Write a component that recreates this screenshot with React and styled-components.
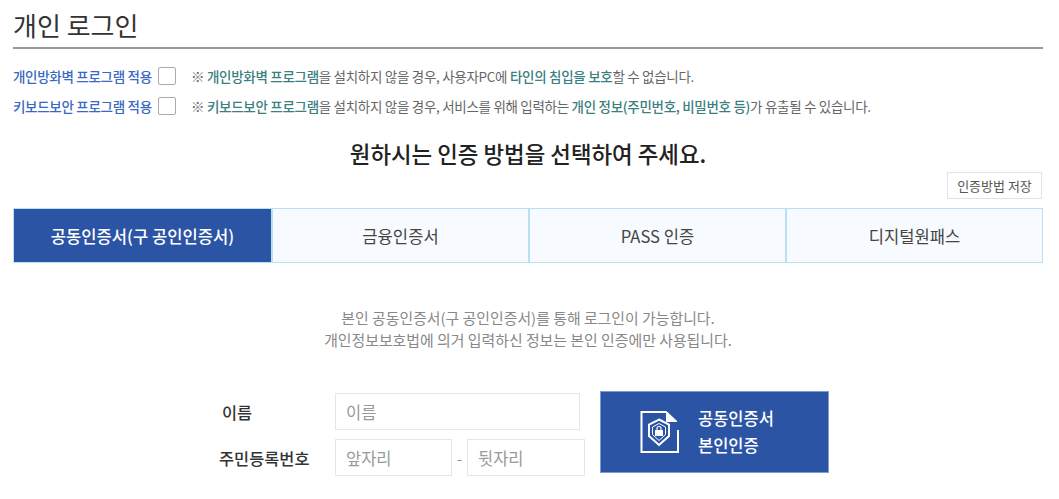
import React from 'react';
import styled, { createGlobalStyle } from 'styled-components';

const GlobalStyle = createGlobalStyle`
  html, body {
    margin: 0;
    padding: 0;
    background: #fff;
  }
  body {
    font-family: "Noto Sans CJK KR", "Noto Sans", sans-serif;
    color: #333;
  }
`;

const Page = styled.div`
  width: 1059px;
  height: 499px;
  overflow: hidden;
  box-sizing: border-box;
  padding: 0 16px 0 13px;
`;
const Header = styled.div`
  height: 49px;
  box-sizing: border-box;
  border-bottom: 2px solid #999;
  padding-top: 7px;
`;
const Title = styled.h1`
  margin: 0;
  font-size: 26px;
  line-height: 36px;
  font-weight: 400;
  color: #333;
`;
const Options = styled.div`
  margin-top: 17px;
  display: flex;
  flex-direction: column;
  gap: 10px;
`;
const OptionRow = styled.div`
  display: flex;
  align-items: center;
  height: 20px;
`;
const OptionLabel = styled.span`
  width: 145px;
  font-size: 13.5px;
  font-weight: 500;
  color: #3a68c4;
  white-space: nowrap;
  letter-spacing: -0.3px;
`;
const CheckBox = styled.span`
  width: 18px;
  height: 18px;
  box-sizing: border-box;
  border: 1px solid #aaa;
  border-radius: 2px;
  background: #fff;
  margin-right: 15px;
`;
const Note = styled.span`
  font-size: 13.5px;
  color: #666;
  white-space: nowrap;
  letter-spacing: -0.3px;
`;
const Mark = styled.b`
  font-weight: 500;
  color: #3a8080;
`;
const Heading = styled.h2`
  margin: 21px 0 0;
  text-align: center;
  font-size: 22.4px;
  line-height: 32px;
  font-weight: 500;
  color: #222;
`;
const SaveRow = styled.div`
  display: flex;
  justify-content: flex-end;
  margin-top: 3px;
  padding-right: 1px;
`;
const SaveButton = styled.button`
  width: 95px;
  height: 27px;
  padding: 0;
  border: 1px solid #e2e2e2;
  background: #fff;
  color: #555;
  font-family: inherit;
  font-size: 13px;
`;
const Tabs = styled.div`
  margin-top: 9px;
  display: grid;
  grid-template-columns: repeat(4, 1fr);
  border: 1px solid #b9dff2;
  height: 55px;
  box-sizing: border-box;
`;
const Tab = styled.div`
  display: flex;
  align-items: center;
  justify-content: center;
  font-size: 16.6px;
  font-weight: ${p => (p.$active ? 500 : 400)};
  color: ${p => (p.$active ? '#fff' : '#444')};
  background: ${p => (p.$active ? '#2c54a5' : '#f7fbff')};
  & + & {
    border-left: 2px solid #b9dff2;
  }
`;
const Intro = styled.p`
  margin: 44px 0 0;
  text-align: center;
  font-size: 14.9px;
  line-height: 22px;
  color: #888;
`;
const LoginArea = styled.div`
  margin-top: 40px;
  display: flex;
  justify-content: center;
  padding-right: 8px;
  gap: 15px;
`;
const Fields = styled.div`
  display: flex;
  flex-direction: column;
  gap: 9px;
  padding-top: 2px;
`;
const FieldRow = styled.div`
  display: flex;
  align-items: center;
  height: 37px;
`;
const FieldLabel = styled.label`
  width: 116px;
  box-sizing: border-box;
  padding-left: ${p => p.$indent || 0}px;
  font-size: 16.4px;
  font-weight: 500;
  color: #333;
`;
const Input = styled.input`
  width: ${p => p.$width}px;
  height: 37px;
  box-sizing: border-box;
  border: 1px solid #e6e6e6;
  padding: 0 10px;
  font-family: inherit;
  font-size: 16.5px;
  &::placeholder {
    color: #999;
    opacity: 1;
  }
`;
const Dash = styled.span`
  width: 15px;
  text-align: center;
  color: #888;
  font-size: 14px;
`;
const CertButton = styled.button`
  width: 229px;
  height: 82px;
  display: flex;
  align-items: center;
  gap: 18px;
  padding: 0 0 0 39px;
  border: 1px solid #7f9ccf;
  background: #2c54a5;
  color: #fff;
  font-family: inherit;
  font-size: 16.5px;
  font-weight: 500;
  line-height: 27px;
  text-align: left;
`;

const CertIcon = () => (
  <svg width="40" height="44" viewBox="0 0 40 44" fill="none" stroke="#fff" strokeWidth="2">
    <path d="M38 20V42H1.500V2H26" />
    <path d="M26.500 1.500L37 11.500H26.500Z" fill="#fff" strokeWidth="1" />
    <path d="M19 9.500L29 14.500V26L19 35L9 26V14.500Z" />
    <path d="M19 13.500L25.500 17V24.500L19 30.500L12.500 24.500V17Z" strokeWidth="1" />
    <rect x="15" y="20" width="8" height="6" fill="#fff" stroke="none" />
    <path d="M17 20V18.500C17 15.800 21 15.800 21 18.500V20" strokeWidth="1.200" />
  </svg>
);

export default function App() {
  return (
    <Page>
      <GlobalStyle />
      <Header>
        <Title>개인 로그인</Title>
      </Header>
      <Options>
        <OptionRow>
          <OptionLabel>개인방화벽 프로그램 적용</OptionLabel>
          <CheckBox />
          <Note>
            ※ <Mark>개인방화벽 프로그램</Mark>을 설치하지 않을 경우, 사용자PC에 <Mark>타인의 침입을 보호</Mark>할 수 없습니다.
          </Note>
        </OptionRow>
        <OptionRow>
          <OptionLabel>키보드보안 프로그램 적용</OptionLabel>
          <CheckBox />
          <Note>
            ※ <Mark>키보드보안 프로그램</Mark>을 설치하지 않을 경우, 서비스를 위해 입력하는 <Mark>개인 정보(주민번호, 비밀번호 등)</Mark>가 유출될 수 있습니다.
          </Note>
        </OptionRow>
      </Options>
      <Heading>원하시는 인증 방법을 선택하여 주세요.</Heading>
      <SaveRow>
        <SaveButton>인증방법 저장</SaveButton>
      </SaveRow>
      <Tabs>
        <Tab $active>공동인증서(구 공인인증서)</Tab>
        <Tab>금융인증서</Tab>
        <Tab>PASS 인증</Tab>
        <Tab>디지털원패스</Tab>
      </Tabs>
      <Intro>
        본인 공동인증서(구 공인인증서)를 통해 로그인이 가능합니다.
        <br />
        개인정보보호법에 의거 입력하신 정보는 본인 인증에만 사용됩니다.
      </Intro>
      <LoginArea>
        <Fields>
          <FieldRow>
            <FieldLabel $indent={3}>이름</FieldLabel>
            <Input $width={245} placeholder="이름" />
          </FieldRow>
          <FieldRow>
            <FieldLabel>주민등록번호</FieldLabel>
            <Input $width={117} placeholder="앞자리" />
            <Dash>-</Dash>
            <Input $width={118} placeholder="뒷자리" />
          </FieldRow>
        </Fields>
        <CertButton>
          <CertIcon />
          <span>
            공동인증서
            <br />
            본인인증
          </span>
        </CertButton>
      </LoginArea>
    </Page>
  );
}
